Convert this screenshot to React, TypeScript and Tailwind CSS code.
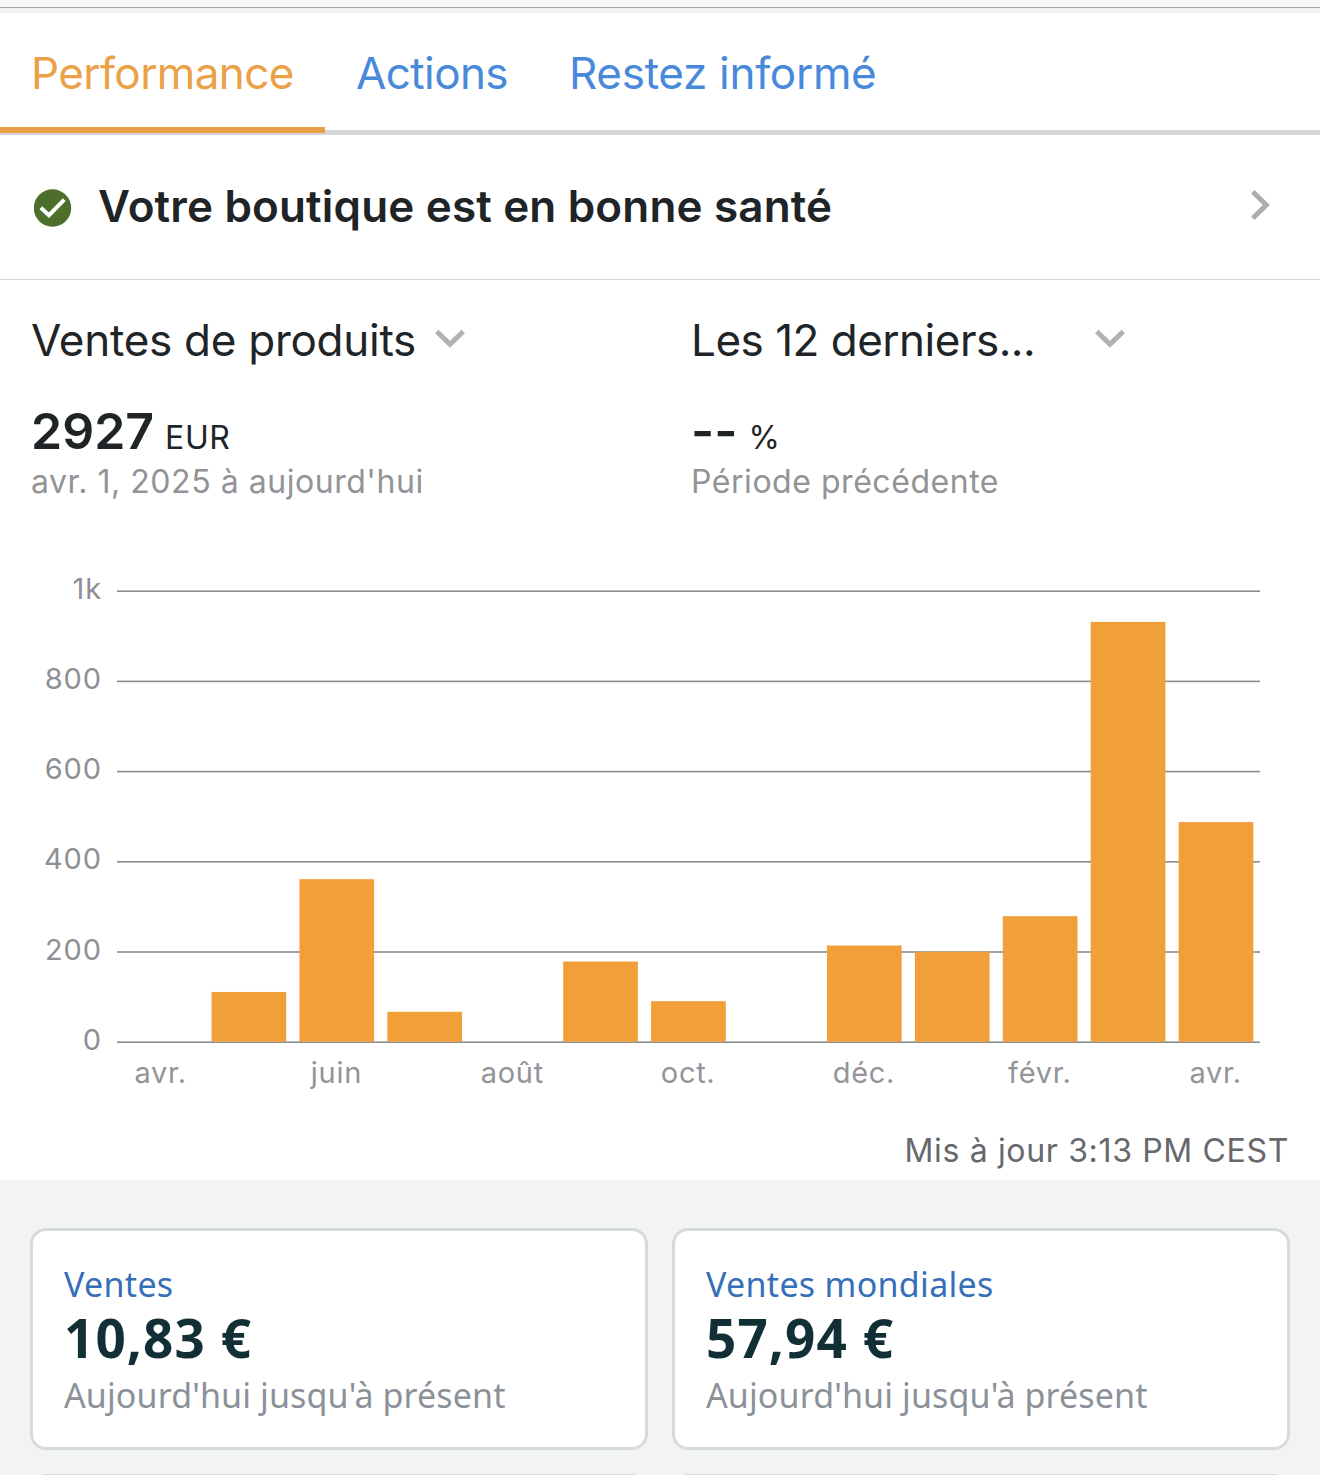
import { clsx } from "clsx";

const TABS = ["Performance", "Actions", "Restez informé"];

const SALES = [
  { month: "avr.", value: 0 },
  { month: "mai", value: 111 },
  { month: "juin", value: 361 },
  { month: "juil.", value: 67 },
  { month: "août", value: 0 },
  { month: "sept.", value: 178.5 },
  { month: "oct.", value: 90.5 },
  { month: "nov.", value: 0 },
  { month: "déc.", value: 214 },
  { month: "janv.", value: 200 },
  { month: "févr.", value: 279 },
  { month: "mars", value: 931.5 },
  { month: "avr.", value: 487.5 },
];

const TICKS = [
  { value: 1000, label: "1k" },
  { value: 800, label: "800" },
  { value: 600, label: "600" },
  { value: 400, label: "400" },
  { value: 200, label: "200" },
  { value: 0, label: "0" },
];

const CARDS = [
  { title: "Ventes", amount: "10,83 €", note: "Aujourd'hui jusqu'à présent" },
  { title: "Ventes mondiales", amount: "57,94 €", note: "Aujourd'hui jusqu'à présent" },
];

export default function App() {
  return (
    <div className="h-[1475px] w-[1320px] overflow-hidden bg-white font-['Inter',sans-serif] text-[#1f2427]">
      <div className="h-2 border-b border-[#a5a6a7] bg-[#f7f7f7]" />
      <div className="h-[5px] bg-[#f2f3f3]" />
      <Tabs />
      <HealthRow />

      <section className="flex h-[256px] pt-[33px]">
        <Metric
          title="Ventes de produits"
          titleClass="tracking-[-0.27px]"
          value="2927"
          unit="EUR"
          caption="avr. 1, 2025 à aujourd'hui"
        />
        <Metric
          title="Les 12 derniers..."
          titleClass="tracking-[-0.5px]"
          value="--"
          unit="%"
          caption="Période précédente"
        />
      </section>

      <SalesChart />

      <p className="h-[74px] pr-[31px] pt-[25px] text-right text-[32px] leading-[40px] tracking-[0.66px] text-[#66686c]">
        Mis à jour 3:13 PM CEST
      </p>

      <section className="h-[295px] bg-[#f2f3f5] px-[30px] pt-12">
        <div className="grid grid-cols-2 gap-6">
          {CARDS.map((c) => (
            <Card key={c.title} {...c} />
          ))}
          <div className="h-[222px] rounded-2xl border-[3px] border-[#d7dadb] bg-white" />
          <div className="h-[222px] rounded-2xl border-[3px] border-[#d7dadb] bg-white" />
        </div>
      </section>
    </div>
  );
}

// ---------- Tabs ----------

function Tabs() {
  return (
    <nav className="flex h-[122px] items-start border-b-[5px] border-[#d5d6d8] text-[44px] leading-[54px]">
      {TABS.map((tab, i) => (
        <button
          key={tab}
          type="button"
          className={clsx(
            "h-[120px] shrink-0 whitespace-nowrap border-b-[6px] pb-[27px] pt-[33px] pl-[31px] text-left",
            i === 0 && "w-[325px] border-[#e8a045] tracking-[-0.6px] text-[#eaa147]",
            i === 1 && "w-[213px] border-transparent tracking-[-0.6px] text-[#4889da]",
            i === 2 && "border-transparent tracking-[-0.3px] text-[#4889da]",
          )}
        >
          {tab}
        </button>
      ))}
    </nav>
  );
}

// ---------- Health ----------

function HealthRow() {
  return (
    <div className="flex h-[145px] items-center border-b border-[#d5d6d8] pl-[34px] pr-[50px]">
      <svg width="38" height="38" viewBox="0 0 38 38" className="mt-[2px] shrink-0">
        <circle cx="18.5" cy="19" r="18.7" fill="#4d6f2b" />
        <path d="M6.8 18.8 L15 26.2 L30.3 10.6" fill="none" stroke="#fff" strokeWidth="4" />
      </svg>
      <h1 className="-mt-[2px] ml-[26px] flex-1 text-[44px] font-semibold leading-[54px] tracking-[0.17px]">
        Votre boutique est en bonne santé
      </h1>
      <svg width="20" height="32" viewBox="0 0 20 32" className="-mt-[5px]">
        <path d="M2.8 2.8 L16.3 16 L2.8 29.2" fill="none" stroke="#acadb0" strokeWidth="5" />
      </svg>
    </div>
  );
}

// ---------- Metric ----------

function Metric({
  title,
  titleClass,
  value,
  unit,
  caption,
}: {
  title: string;
  titleClass: string;
  value: string;
  unit: string;
  caption: string;
}) {
  return (
    <div className="w-1/2 pl-[31px]">
      <button type="button" className="flex items-center text-[44px] leading-[54px]">
        <span className={clsx("w-[404px] whitespace-nowrap text-left", titleClass)}>{title}</span>
        <svg width="30" height="20" viewBox="0 0 30 20" className="-mt-[2px]">
          <path d="M1.8 2.5 L15 15.2 L28.2 2.5" fill="none" stroke="#b0b1b3" strokeWidth="5" />
        </svg>
      </button>
      <div className="mt-[34px] flex h-[60px] items-baseline leading-[60px]">
        <span className="text-[50px] font-semibold">{value}</span>
        <span className="ml-[11px] text-[32px] tracking-[0.6px]">{unit}</span>
      </div>
      <div className="mt-px text-[32px] leading-[40px] tracking-[0.54px] text-[#929397]">
        {caption}
      </div>
    </div>
  );
}

// ---------- Chart ----------

function SalesChart() {
  const baseline = 506;
  const y = (v: number) => baseline - v * 0.451;

  return (
    <svg width="1320" height="570" viewBox="0 0 1320 570" className="block" fontSize="29">
      {TICKS.map((t) => (
        <g key={t.value}>
          <rect x="117" y={y(t.value) - 0.6} width="1143" height="1.6" fill="#8a8b8e" />
          <text x="102" y={y(t.value) + 7.8} textAnchor="end" letterSpacing="0.9" fill="#8e9095">
            {t.label}
          </text>
        </g>
      ))}
      {SALES.map((s, i) => {
        const cx = 161 + i * 87.92;
        return (
          <g key={i}>
            {s.value > 0 && (
              <rect
                x={cx - 37.4}
                y={y(s.value)}
                width="74.7"
                height={s.value * 0.451 - 0.3}
                fill="#f19f39"
              />
            )}
            {/* only every other month is labelled */}
            {i % 2 === 0 && (
              <text x={cx - 0.4} y="547" textAnchor="middle" letterSpacing="0.7" fill="#929499">
                {s.month}
              </text>
            )}
          </g>
        );
      })}
    </svg>
  );
}

// ---------- Card ----------

function Card({ title, amount, note }: { title: string; amount: string; note: string }) {
  return (
    <article className="h-[222px] rounded-2xl border-[3px] border-[#d7dadb] bg-white pl-[31px] pt-[30px] font-['Noto_Sans',sans-serif]">
      <h2 className="text-[34px] leading-[46px] tracking-[0.3px] text-[#366fb8]">{title}</h2>
      <p className="text-[53px] font-bold leading-[62px] tracking-[1.1px] text-[#122f36]">{amount}</p>
      <p className="text-[34px] leading-[52px] tracking-[0.12px] text-[#8b9199]">{note}</p>
    </article>
  );
}
